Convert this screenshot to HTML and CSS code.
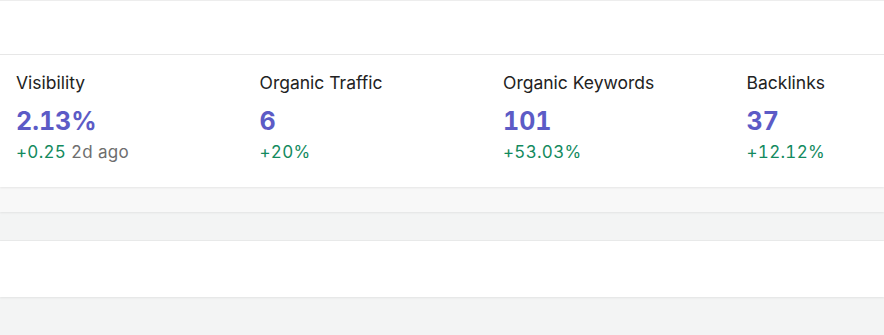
FILE: index.html
```html
<!DOCTYPE html>
<html>
<head>
<meta charset="utf-8">
<link rel="stylesheet" href="styles.css">
</head>
<body>
<div class="page">
  <header class="topbar"></header>
  <section class="stats">
    <div class="stat">
      <div class="label">Visibility</div>
      <div class="value">2.13%</div>
      <div class="change"><span class="up">+0.25</span> <span class="muted">2d ago</span></div>
    </div>
    <div class="stat">
      <div class="label">Organic Traffic</div>
      <div class="value">6</div>
      <div class="change"><span class="up">+20%</span></div>
    </div>
    <div class="stat">
      <div class="label">Organic Keywords</div>
      <div class="value">101</div>
      <div class="change"><span class="up">+53.03%</span></div>
    </div>
    <div class="stat">
      <div class="label">Backlinks</div>
      <div class="value">37</div>
      <div class="change"><span class="up">+12.12%</span></div>
    </div>
  </section>
  <div class="strip strip-light"></div>
  <div class="strip strip-gray"></div>
  <div class="panel"></div>
  <div class="rest"></div>
</div>
</body>
</html>
```

FILE: styles.css
```css
* { box-sizing: border-box; }
html, body {
  margin: 0;
  padding: 0;
  background: #f3f4f4;
  font-family: Inter, "Noto Sans", sans-serif;
  overflow: hidden;
}
.page {
  width: 884px;
  height: 335px;
  overflow: hidden;
  display: flex;
  flex-direction: column;
}
.topbar {
  height: 55px;
  background: #fff;
  border-top: 1px solid #ededed;
  border-bottom: 1px solid #e8e8e8;
  flex: none;
}
.stats {
  flex: none;
  height: 132px;
  background: #fff;
  display: grid;
  grid-template-columns: repeat(4, 243.5px);
  padding: 15px 0 0 16px;
  box-shadow: 0 1px 2px rgba(0,0,0,0.08);
  position: relative;
  z-index: 3;
}
.stat { display: flex; flex-direction: column; }
.label {
  font-size: 17.5px;
  line-height: 26px;
  color: #222;
}
.value {
  font-size: 25px;
  font-weight: 700;
  line-height: 34px;
  color: #5c5bc6;
  margin-top: 8px;
  font-variant-numeric: tabular-nums;
}
.change {
  font-size: 17px;
  line-height: 24px;
  margin-top: 2px;
  letter-spacing: 0.3px;
  font-variant-numeric: tabular-nums;
}
.up { color: #138a5e; }
.muted { color: #6e6e6e; }
.strip { flex: none; }
.strip-light {
  height: 25px;
  background: #f8f8f8;
  box-shadow: 0 1px 2px rgba(0,0,0,0.07);
  position: relative;
  z-index: 2;
}
.strip-gray {
  height: 29px;
  background: #f3f4f4;
  border-bottom: 1px solid #e9eaea;
}
.panel {
  flex: none;
  height: 56px;
  background: #fff;
  box-shadow: 0 1px 2px rgba(0,0,0,0.07);
  position: relative;
  z-index: 1;
}
.rest { flex: 1; background: #f3f4f4; }
```
